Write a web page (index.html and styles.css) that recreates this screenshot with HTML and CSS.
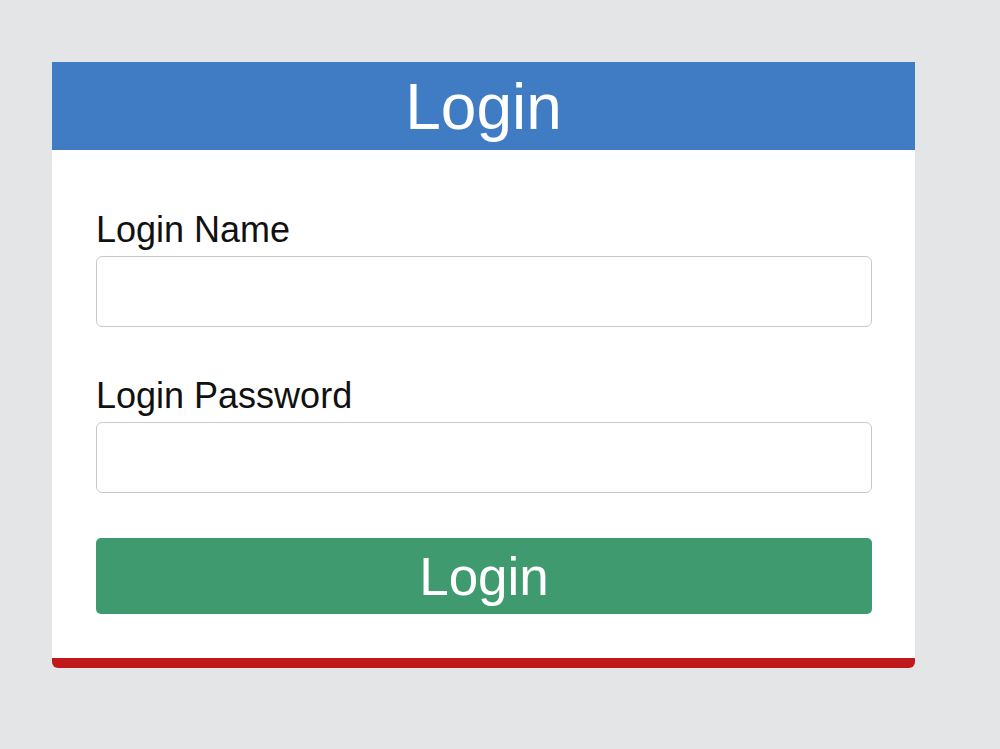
FILE: index.html
```html
<!DOCTYPE html>
<html lang="en">
<head>
    <meta charset="UTF-8">
    <meta name="viewport" content="width=device-width, initial-scale=1.0">
    <title>Login</title>
    <link rel="stylesheet" href="styles.css">
</head>
<body>
    <div class="login-box">
        <h2 class="login-title">Login</h2>
        <form class="login-form">
            <label for="login_name">Login Name</label>
            <input type="text" id="login_name" name="login_name">

            <label for="login_password">Login Password</label>
            <input type="password" id="login_password" name="login_password">

            <button type="submit" class="login-button">Login</button>
        </form>
    </div>
</body>
</html>
```

FILE: styles.css
```css
body {
    font-family: 'Liberation Sans', Arial, sans-serif;
    background: #e4e5e7;
    margin: 0;
    padding: 62px 0 0 52px;
}
.login-box {
    width: 863px;
    background: #fff;
    border-bottom: 10px solid #c0191b;
    border-radius: 0 0 6px 6px;
}
.login-title {
    margin: 0;
    height: 88px;
    line-height: 90px;
    background: #3f7cc4;
    color: #fff;
    font-size: 64px;
    font-weight: normal;
    text-align: center;
}
.login-form {
    padding: 60px 43px 44px 44px;
}
label {
    display: block;
    font-size: 36px;
    line-height: 40px;
    color: #111;
    margin-bottom: 6px;
}
input {
    display: block;
    width: 100%;
    height: 71px;
    margin: 0 0 49px;
    border: 1px solid #c9c9c9;
    border-radius: 6px;
    box-sizing: border-box;
    font-size: 30px;
    padding: 0 12px;
}
.login-button {
    display: block;
    width: 100%;
    height: 76px;
    margin-top: -4px;
    border: none;
    border-radius: 5px;
    background: #3f9a6f;
    color: #fff;
    font-family: 'Liberation Sans', Arial, sans-serif;
    font-size: 53px;
    cursor: pointer;
}
.login-button:hover {
    background: #378a62;
}
```
